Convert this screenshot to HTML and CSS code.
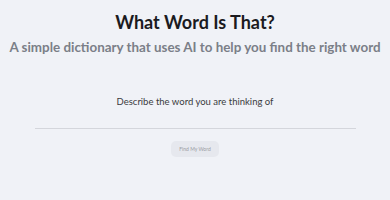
FILE: index.html
```html
<!DOCTYPE html>
<html lang="en">
<head>
  <meta charset="UTF-8" />
  <meta name="viewport" content="width=device-width, initial-scale=1.0" />
  <title>What Word Is That?</title>
  <link rel="stylesheet" href="styles.css">
</head>
<body>
  <header class="hero">
    <h1>What Word Is That?</h1>
    <h2>A simple dictionary that uses AI to help you find the right word</h2>
  </header>

  <main class="search">
    <label for="describe" class="prompt">Describe the word you are thinking of</label>
    <input id="describe" class="describe-input" type="text" />
    <button class="find-btn">Find My Word</button>
  </main>
</body>
</html>
```

FILE: styles.css
```css
body {
  margin: 0;
  background-color: #f0f2f7;
  font-family: Lato, "Noto Sans", sans-serif;
  text-align: center;
  color: #1b1b1f;
}

.hero {
  padding-top: 9px;
}

.hero h1 {
  margin: 0;
  font-size: 18px;
  font-weight: 700;
  line-height: 26px;
}

.hero h2 {
  margin: 0;
  font-size: 13.4px;
  font-weight: 700;
  line-height: 24px;
  color: #7b7f88;
  white-space: nowrap;
}

.search {
  display: flex;
  flex-direction: column;
  align-items: center;
  padding-top: 35px;
}

.prompt {
  font-size: 9.5px;
  color: #3a3b40;
  line-height: 16px;
}

.describe-input {
  width: 321px;
  height: 16px;
  margin-top: 2px;
  padding: 0;
  border: none;
  border-bottom: 1px solid #d4d6dc;
  background: transparent;
  outline: none;
}

.find-btn {
  margin-top: 12px;
  padding: 0 8px;
  font-family: inherit;
  font-size: 5px;
  color: #9a9ca3;
  background: #e6e8ee;
  border: none;
  border-radius: 5px;
  height: 16px;
}
```
